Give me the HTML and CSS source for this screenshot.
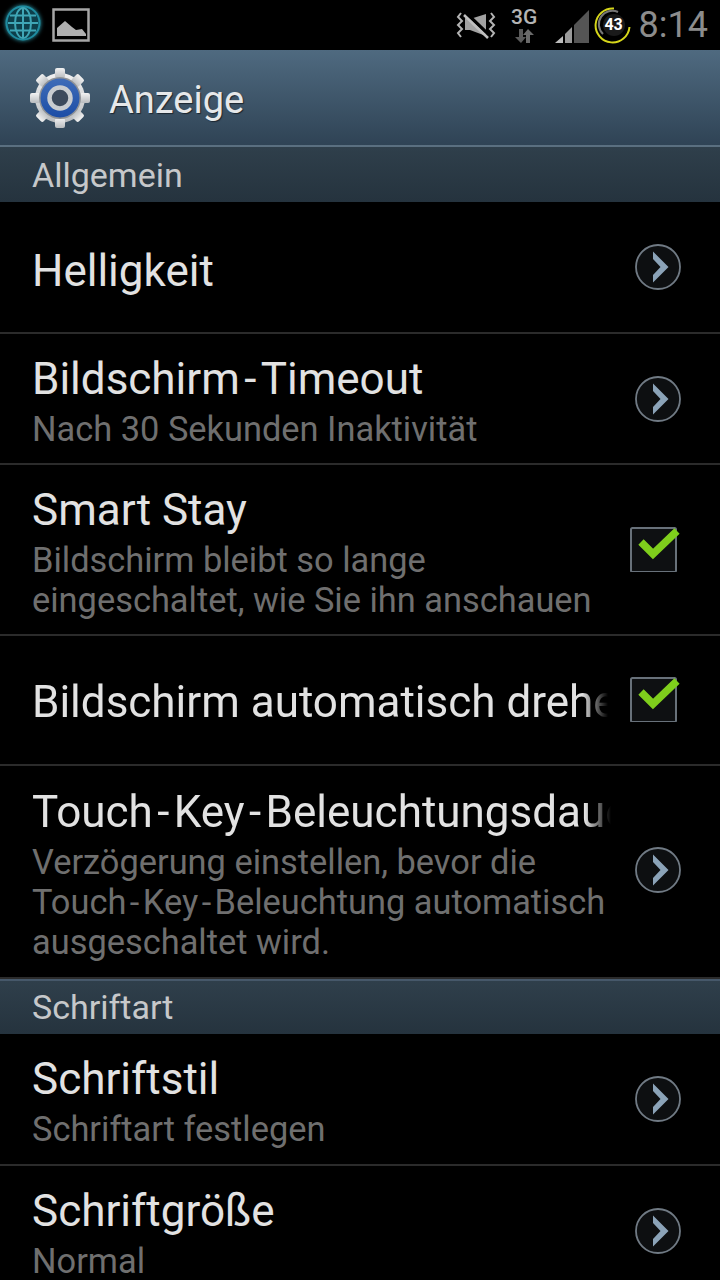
FILE: index.html
```html
<!DOCTYPE html>
<html lang="de">
<head>
    <meta charset="UTF-8">
    <title>Anzeige</title>
    <link rel="stylesheet" href="styles.css">
</head>
<body>
    <svg class="defs" width="0" height="0">
        <symbol id="arrow" viewBox="0 0 46 46">
            <circle cx="23" cy="23" r="22" fill="#0d0f11" stroke="#707a84" stroke-width="1.8"/>
            <path d="M18 7.5 L33.5 23 L18 38.5 L18 31 L25.5 23 L18 15 Z" fill="#8ba3b8"/>
        </symbol>
        <symbol id="check" viewBox="0 0 52 48">
            <rect x="2" y="4" width="45" height="44" rx="1.5" fill="#0e1012" stroke="#68717a" stroke-width="2"/>
            <path d="M12 18 L24 30 L48 7" fill="none" stroke="#7fce1c" stroke-width="7.5"/>
        </symbol>
    </svg>

    <div class="status-bar">
        <svg class="globe" width="36" height="36" viewBox="0 0 36 36">
            <circle cx="18" cy="18" r="16.5" fill="#0d3f4b" stroke="#1f8ca0" stroke-width="2"/>
            <g fill="none" stroke="#3fa6b6" stroke-width="2">
                <ellipse cx="18" cy="18" rx="8" ry="15"/>
                <path d="M18 3V33M3 18H33M5 10.500H31M5 25.500H31"/>
            </g>
        </svg>
        <svg class="picture" width="38" height="34" viewBox="0 0 38 34">
            <rect x="1.500" y="1.500" width="35" height="31" fill="none" stroke="#a6a6a6" stroke-width="2.500"/>
            <path d="M5 28V20L13 13L20 19L24 22L30 21L34 26V28Z" fill="#b0b0b0"/>
        </svg>
        <div class="spacer"></div>
        <svg class="mute" width="40" height="28" viewBox="0 0 40 28">
            <path d="M9 7L14 8L30 3V25L14 19L9 19Z" fill="#a2a2a2"/>
            <path d="M9 1L33 24" stroke="#000" stroke-width="3.500"/>
            <path d="M8 4L32 27" stroke="#c0c0c0" stroke-width="2.500"/>
            <path d="M5 2L2 6L6 10L2 14L6 18L2 22L5 26M35 2L38 6L34 10L38 14L34 18L38 22L35 26" fill="none" stroke="#b4b4b4" stroke-width="2"/>
        </svg>
        <div class="network">
            <span>3G</span>
            <svg width="22" height="16" viewBox="0 0 22 16">
                <path d="M6 1H10V9H13L8 15L2 9H6Z" fill="#5a5a5a"/>
                <path d="M13 15H17V7H21L15 1L10 7H13Z" fill="#6a6a6a"/>
            </svg>
        </div>
        <svg class="signal" width="34" height="34" viewBox="0 0 34 34">
            <path d="M0 33L8 26V33Z" fill="#bdbdbd"/>
            <path d="M10 24L17 17V33H10Z" fill="#9a9a9a"/>
            <path d="M19 15L34 0V33H19Z" fill="#555"/>
        </svg>
        <div class="battery">
            <svg width="38" height="38" viewBox="0 0 38 38">
                <path d="M20 2.500A17 17 0 1 0 35.500 21" fill="none" stroke="#d6d61a" stroke-width="2"/>
                <path d="M24 6A13.500 13.500 0 0 0 9 28" fill="none" stroke="#777" stroke-width="2"/>
                <circle cx="20" cy="19" r="11" fill="#1a1a1a"/>
            </svg>
            <span>43</span>
        </div>
        <div class="clock">8:14</div>
    </div>

    <div class="action-bar">
        <svg width="62" height="62" viewBox="0 0 62 62">
            <defs>
                <linearGradient id="metal" x1="0" y1="0" x2="0" y2="1">
                    <stop offset="0" stop-color="#f2f2f2"/>
                    <stop offset="1" stop-color="#b9bcbf"/>
                </linearGradient>
                <linearGradient id="blue" x1="0" y1="0" x2="0" y2="1">
                    <stop offset="0" stop-color="#3f6cb8"/>
                    <stop offset="1" stop-color="#1c4da6"/>
                </linearGradient>
            </defs>
            <circle cx="31" cy="31" r="25" fill="url(#metal)"/>
            <g fill="url(#metal)">
                <rect x="26" y="1" width="10" height="10" rx="2"/>
                <rect x="26" y="51" width="10" height="10" rx="2"/>
                <rect x="1" y="26" width="10" height="10" rx="2"/>
                <rect x="51" y="26" width="10" height="10" rx="2"/>
                <rect x="26" y="1" width="10" height="10" rx="2" transform="rotate(45 31 31)"/>
                <rect x="26" y="1" width="10" height="10" rx="2" transform="rotate(135 31 31)"/>
                <rect x="26" y="1" width="10" height="10" rx="2" transform="rotate(225 31 31)"/>
                <rect x="26" y="1" width="10" height="10" rx="2" transform="rotate(315 31 31)"/>
            </g>
            <circle cx="31" cy="31" r="21" fill="#8f9296"/>
            <circle cx="31" cy="31" r="19.500" fill="url(#blue)"/>
            <circle cx="31" cy="31" r="10.500" fill="#3d4a5c" stroke="#c9ccd0" stroke-width="4.500"/>
        </svg>
        <h1>Anzeige</h1>
    </div>

    <div class="section first">Allgemein</div>

    <div class="row r-132">
        <div class="text"><div class="title lower">Helligkeit</div></div>
        <svg class="arrow"><use href="#arrow"/></svg>
    </div>
    <div class="row r-131">
        <div class="text">
            <div class="title">Bildschirm<span class="hy">-</span>Timeout</div>
            <div class="sub">Nach 30 Sekunden Inaktivität</div>
        </div>
        <svg class="arrow"><use href="#arrow"/></svg>
    </div>
    <div class="row r-171">
        <div class="text">
            <div class="title">Smart Stay</div>
            <div class="sub">Bildschirm bleibt so lange<br>eingeschaltet, wie Sie ihn anschauen</div>
        </div>
        <svg class="check"><use href="#check"/></svg>
    </div>
    <div class="row r-130">
        <div class="text"><div class="title fade">Bildschirm automatisch drehen</div></div>
        <svg class="check"><use href="#check"/></svg>
    </div>
    <div class="row r-213">
        <div class="text">
            <div class="title fade">Touch<span class="hy">-</span>Key<span class="hy">-</span>Beleuchtungsdauer</div>
            <div class="sub">Verzögerung einstellen, bevor die<br>Touch<span class="hy">-</span>Key<span class="hy">-</span>Beleuchtung automatisch<br>ausgeschaltet wird.</div>
        </div>
        <svg class="arrow up"><use href="#arrow"/></svg>
    </div>

    <div class="section">Schriftart</div>

    <div class="row r-132">
        <div class="text">
            <div class="title">Schriftstil</div>
            <div class="sub">Schriftart festlegen</div>
        </div>
        <svg class="arrow"><use href="#arrow"/></svg>
    </div>
    <div class="row r-131">
        <div class="text">
            <div class="title">Schriftgröße</div>
            <div class="sub">Normal</div>
        </div>
        <svg class="arrow"><use href="#arrow"/></svg>
    </div>
</body>
</html>
```
FILE: styles.css
```css
html, body {
    margin: 0;
    height: 1280px;
    overflow: hidden;
    background: #000;
    font-family: Roboto, "Liberation Sans", sans-serif;
}
.defs {
    position: absolute;
}
.status-bar {
    height: 50px;
    display: flex;
    align-items: center;
    padding: 0 12px 0 5px;
    box-sizing: border-box;
}
.globe {
    margin-top: -5px;
    filter: drop-shadow(0 0 2px #2fa4b8);
}
.picture {
    margin-left: 11px;
    margin-top: -1px;
}
.spacer {
    flex: 1;
}
.network {
    margin-left: 15px;
    width: 27px;
    display: flex;
    flex-direction: column;
    align-items: center;
    font-size: 21px;
    font-weight: 500;
    line-height: 21px;
    color: #b4b4b4;
}
.signal {
    margin-left: 17px;
    margin-top: 4px;
}
.battery {
    position: relative;
    width: 38px;
    height: 38px;
    margin-left: 5px;
}
.battery span {
    position: absolute;
    left: 9px;
    top: 10px;
    width: 22px;
    text-align: center;
    font-size: 16px;
    line-height: 18px;
    font-weight: 700;
    color: #fff;
}
.clock {
    margin-left: 7px;
    font-size: 36px;
    color: #8c8c8c;
    line-height: 50px;
}
.action-bar {
    height: 95px;
    display: flex;
    align-items: center;
    padding-left: 29px;
    background: linear-gradient(#4f6a80, #2f4355);
}
.action-bar h1 {
    margin: 5px 0 0 18px;
    font-size: 38px;
    font-weight: 400;
    color: #e6e8ea;
    text-shadow: 1px 1px 1px #1c2630;
}
.section {
    height: 55px;
    box-sizing: border-box;
    border-top: 2px solid #46586a;
    padding-left: 32px;
    background: linear-gradient(#2f3f4b, #25333e);
    font-size: 34px;
    line-height: 53px;
    color: #c6c8ca;
}
.section.first {
    height: 57px;
    padding-top: 2px;
    border-top-color: #5a6f80;
}
.row {
    display: flex;
    align-items: center;
    box-sizing: border-box;
    padding: 0 39px 0 32px;
    border-bottom: 2px solid #2b2b2b;
}
.r-132 { height: 132px; }
.r-131 { height: 131px; }
.r-130 { height: 130px; }
.r-171 { height: 171px; }
.r-213 { height: 213px; }
.text {
    flex: 1;
    min-width: 0;
    padding-top: 4px;
    overflow: hidden;
    white-space: nowrap;
}
.title {
    font-size: 44px;
    line-height: 52px;
    color: #e2e2e2;
}
.title.lower {
    margin-top: 3px;
}
.title.fade {
    -webkit-mask-image: linear-gradient(to right, #000 calc(100% - 26px), transparent);
    mask-image: linear-gradient(to right, #000 calc(100% - 26px), transparent);
}
.hy {
    padding: 0 0.1em;
}
.sub {
    margin-top: 4px;
    font-size: 34.400px;
    line-height: 40px;
    color: #6f6f6f;
}
.arrow {
    width: 46px;
    height: 46px;
    margin-left: 24px;
}
.arrow.up {
    margin-top: -3px;
}
.check {
    width: 52px;
    height: 48px;
    margin-left: 21px;
    margin-top: -4px;
}
```
